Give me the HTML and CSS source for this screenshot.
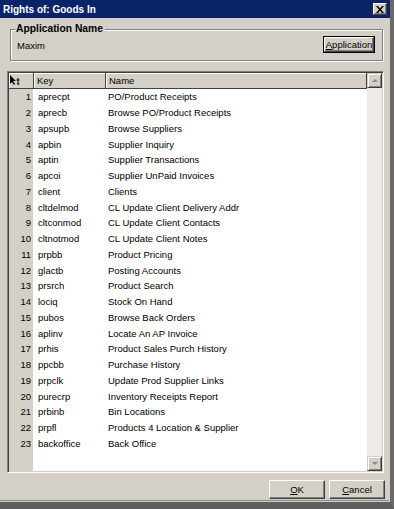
FILE: index.html
```html
<!DOCTYPE html>
<html>
<head lang="en">
  <meta charset="UTF-8">
  <title>Rights of: Goods In</title>
  <link rel="stylesheet" href="styles.css">
</head>
<body>

<div class="frame">
  <!-- title bar -->
  <div class="titlebar">
    <span class="title">Rights of: Goods In</span>
    <span class="close">
      <svg width="8" height="7" viewBox="0 0 8 7"><path d="M0 0h2l2 2.5L6 0h2L5 3.5 8 7H6L4 4.5 2 7H0l3-3.5z" fill="#000"/></svg>
    </span>
  </div>

  <!-- application group -->
  <fieldset class="group">
    <legend>Application Name</legend>
    <div class="group-row">
      <span>Maxim</span>
      <button class="btn btn-default"><u>A</u>pplication</button>
    </div>
  </fieldset>

  <!-- rights grid -->
  <div class="grid">
    <div class="grid-main">
      <div class="grid-head">
        <div class="hcell hnum">
          <svg width="11" height="11" viewBox="0 0 11 11"><path d="M0 0v9l2-2 2 3 1-1-2-3h3z" fill="#000"/><path d="M8 3v6M6.5 5h3M7 9h2.5" stroke="#000" stroke-width="1" fill="none"/></svg>
        </div>
        <div class="hcell">Key</div>
        <div class="hcell hname">Name</div>
      </div>
      <div class="grid-body" id="rows"></div>
    </div>
    <div class="vscroll">
      <span class="sbtn"><i class="arr-up"></i></span>
      <span class="strack"></span>
      <span class="sbtn"><i class="arr-down"></i></span>
    </div>
  </div>

  <!-- buttons -->
  <div class="footer">
    <button class="btn btn-ok"><u>O</u>K</button>
    <button class="btn btn-ok"><u>C</u>ancel</button>
  </div>
</div>

<script>
  var data = [
    ["aprecpt", "PO/Product Receipts"],
    ["aprecb", "Browse PO/Product Receipts"],
    ["apsupb", "Browse Suppliers"],
    ["apbin", "Supplier Inquiry"],
    ["aptin", "Supplier Transactions"],
    ["apcoi", "Supplier UnPaid Invoices"],
    ["client", "Clients"],
    ["cltdelmod", "CL Update Client Delivery Addr"],
    ["cltconmod", "CL Update Client Contacts"],
    ["cltnotmod", "CL Update Client Notes"],
    ["prpbb", "Product Pricing"],
    ["glactb", "Posting Accounts"],
    ["prsrch", "Product Search"],
    ["lociq", "Stock On Hand"],
    ["pubos", "Browse Back Orders"],
    ["aplinv", "Locate An AP Invoice"],
    ["prhis", "Product Sales Purch History"],
    ["ppcbb", "Purchase History"],
    ["prpclk", "Update Prod Supplier Links"],
    ["purecrp", "Inventory Receipts Report"],
    ["prbinb", "Bin Locations"],
    ["prpfl", "Products 4 Location & Supplier"],
    ["backoffice", "Back Office"]
  ];
  var rows = document.getElementById("rows");
  for (var i = 0; i < data.length; i++) {
    var row = document.createElement("div");
    row.className = "grid-row";
    row.innerHTML = '<span class="cnum">' + (i + 1) + '</span>' +
      '<span class="ckey">' + data[i][0] + '</span>' +
      '<span class="cname">' + data[i][1].replace("&", "&amp;") + '</span>';
    rows.appendChild(row);
  }
</script>
</body>
</html>
```

FILE: styles.css
```css
* {
  margin: 0;
  padding: 0;
  box-sizing: border-box;
}

body, html {
  width: 394px;
  height: 509px;
  overflow: hidden;
  background: #404040;
}

body {
  font-family: "Liberation Sans", Arial, sans-serif;
  font-size: 9.5px;
  color: #000;
}

.frame {
  display: flex;
  flex-direction: column;
  width: 394px;
  height: 509px;
  background: #d4d0c8;
  border-right: 4px solid #6a6a6a;
  border-bottom: 7px solid #5e5e5e;
  box-shadow: inset -1px -1px 0 #d4d0c8, inset 0 -2px 0 #8c8c8c;
}

.titlebar {
  display: flex;
  align-items: center;
  justify-content: space-between;
  height: 18px;
  padding: 0 3px 0 3px;
  background: #0a246a;
  color: #fff;
}

.title {
  font-weight: bold;
  font-size: 10px;
}

.close {
  display: flex;
  align-items: center;
  justify-content: center;
  width: 14px;
  height: 12px;
  background: #d4d0c8;
  border: 1px solid;
  border-color: #fff #404040 #404040 #fff;
  box-shadow: inset -1px -1px 0 #808080;
}

.group {
  margin: 5px 7px 0 10px;
  height: 38px;
  border: 1px solid #808080;
  box-shadow: inset 1px 1px 0 #fff, 1px 1px 0 #fff;
  padding: 0 8px 0 6px;
}

.group legend {
  font-weight: bold;
  font-size: 10.3px;
  line-height: 12px;
  padding: 0 2px 0 1px;
  margin-left: -2px;
  background: #d4d0c8;
}

.group-row {
  display: flex;
  align-items: center;
  justify-content: space-between;
  margin-top: 3px;
}

.btn {
  font-family: "Liberation Sans", Arial, sans-serif;
  font-size: 9.5px;
  background: #d4d0c8;
  color: #000;
  border: 1px solid;
  border-color: #fff #404040 #404040 #fff;
  box-shadow: inset -1px -1px 0 #808080;
  text-align: center;
}

.btn-default {
  width: 50px;
  height: 15px;
  outline: 1px solid #000;
  margin-top: -1px;
}

.btn-ok {
  width: 56px;
  height: 19px;
}

.grid {
  display: flex;
  margin: 10px 6px 0 7px;
  height: 402px;
  border: 1px solid;
  border-color: #808080 #fff #fff #808080;
  box-shadow: inset 1px 1px 0 #404040, inset -1px -1px 0 #d4d0c8;
  padding: 1px;
}

.grid-main {
  flex: 1;
  display: flex;
  flex-direction: column;
  background: linear-gradient(to right, #d4d0c8 24px, #fff 24px);
}

.grid-head {
  display: flex;
  height: 16px;
  background: #d4d0c8;
  border-bottom: 1px solid #404040;
}

.hcell {
  display: flex;
  align-items: center;
  width: 72px;
  padding-left: 3px;
  border-right: 1px solid #404040;
  box-shadow: inset 1px 1px 0 #fff;
}

.hnum {
  width: 25px;
  padding-left: 1px;
}

.hname {
  flex: 1;
  border-right: 1px solid #404040;
}

.grid-body {
  flex: 1;
}

.grid-row {
  display: flex;
  height: 15.75px;
  align-items: center;
}

.cnum {
  width: 24px;
  padding-right: 2px;
  text-align: right;
}

.ckey {
  width: 72px;
  padding-left: 5px;
}

.cname {
  flex: 1;
  padding-left: 3px;
  white-space: nowrap;
}

.vscroll {
  display: flex;
  flex-direction: column;
  width: 15px;
  background: #ecebe6;
}

.strack {
  flex: 1;
}

.sbtn {
  display: flex;
  align-items: center;
  justify-content: center;
  height: 15px;
  background: #d4d0c8;
  border: 1px solid;
  border-color: #d4d0c8 #404040 #404040 #d4d0c8;
  box-shadow: inset 1px 1px 0 #fff, inset -1px -1px 0 #808080;
}

.arr-up, .arr-down {
  width: 0;
  height: 0;
  border-left: 3px solid transparent;
  border-right: 3px solid transparent;
}

.arr-up {
  border-bottom: 3px solid #8a8a8a;
}

.arr-down {
  border-top: 3px solid #8a8a8a;
}

.footer {
  display: flex;
  justify-content: flex-end;
  gap: 4px;
  margin: 7px 5px 0 0;
}
```
